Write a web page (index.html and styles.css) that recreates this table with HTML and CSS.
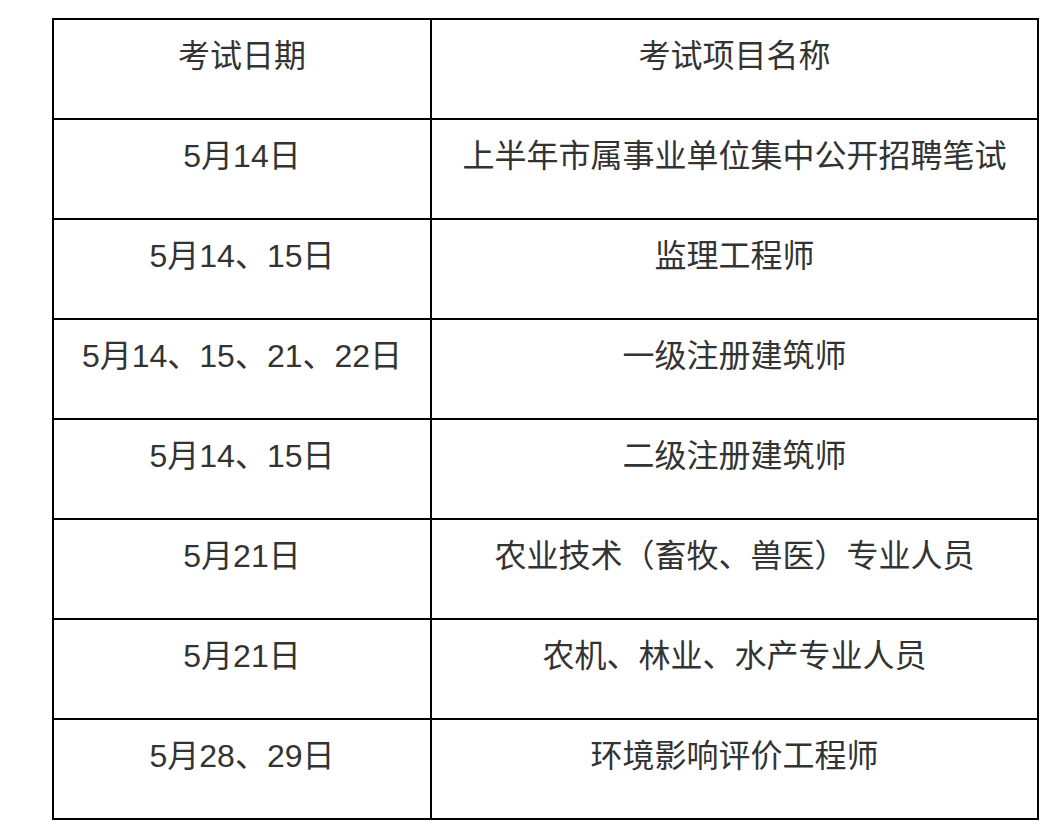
FILE: index.html
```html
<!DOCTYPE html>
<html lang="zh-CN">
<head>
<meta charset="utf-8">
<title>考试安排</title>
<link rel="stylesheet" href="styles.css">
</head>
<body>
<table class="exam-table">
  <colgroup>
    <col class="col-date">
    <col class="col-name">
  </colgroup>
  <tbody>
    <tr><td>考试日期</td><td>考试项目名称</td></tr>
    <tr><td>5月14日</td><td>上半年市属事业单位集中公开招聘笔试</td></tr>
    <tr><td>5月14、15日</td><td>监理工程师</td></tr>
    <tr><td>5月14、15、21、22日</td><td>一级注册建筑师</td></tr>
    <tr><td>5月14、15日</td><td>二级注册建筑师</td></tr>
    <tr><td>5月21日</td><td>农业技术（畜牧、兽医）专业人员</td></tr>
    <tr><td>5月21日</td><td>农机、林业、水产专业人员</td></tr>
    <tr><td>5月28、29日</td><td>环境影响评价工程师</td></tr>
  </tbody>
</table>
</body>
</html>
```

FILE: styles.css
```css
html, body {
  margin: 0;
  padding: 0;
  background: #ffffff;
}
body {
  padding: 18px 0 0 52px;
}
.exam-table {
  border-collapse: collapse;
  table-layout: fixed;
  width: 987px;
  font-family: "Liberation Sans", "Noto Sans CJK SC", sans-serif;
  font-size: 32px;
  color: #333333;
}
.col-date { width: 378px; }
.col-name { width: 607px; }
.exam-table td {
  border: 2px solid #000000;
  height: 100px;
  box-sizing: border-box;
  padding: 16px 0 0 0;
  vertical-align: top;
  text-align: center;
  line-height: 40px;
  white-space: nowrap;
}
```
